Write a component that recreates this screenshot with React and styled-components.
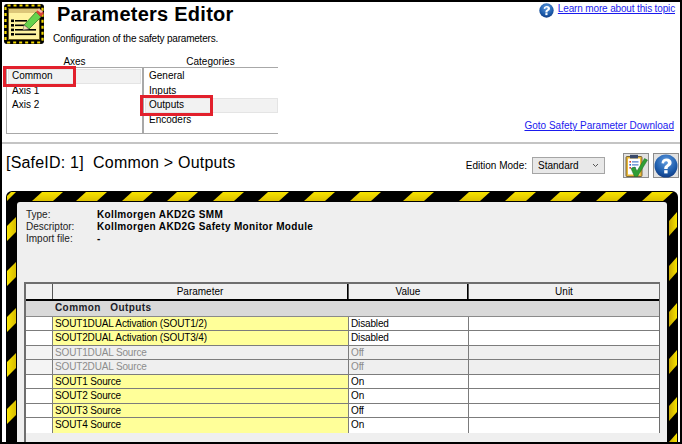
import React from "react";
import styled, { createGlobalStyle } from "styled-components";

const GlobalStyle = createGlobalStyle`
  html, body {
    margin: 0;
    padding: 0;
    background: #fff;
  }
  body {
    font-family: "Liberation Sans", Arial, sans-serif;
    font-size: 10px;
    color: #000;
  }
`;

const Window = styled.div`
  position: relative;
  width: 682px;
  height: 444px;
  box-sizing: border-box;
  border: 2px solid #000;
  background: #fff;
  overflow: hidden;
`;

const Header = styled.header`
  position: relative;
  height: 140px;
  border-bottom: 2px solid #c4c4c4;
  display: grid;
  grid-template-columns: 47px 1fr auto;
  grid-template-rows: 54px 1fr;
`;

const Logo = styled.div`
  padding: 2px 0 0 2px;
`;

const TitleBlock = styled.div`
  padding: 0 0 0 4px;
`;

const Title = styled.h1`
  margin: 0 0 0 4px;
  font-size: 20px;
  line-height: 22px;
  padding-top: 1px;
  font-weight: bold;
  letter-spacing: 0.25px;
`;

const Subtitle = styled.p`
  margin: 8px 0 0 0;
  font-size: 10px;
  line-height: 12px;
  letter-spacing: -0.2px;
`;

const Link = styled.a`
  color: #1a1aee;
  text-decoration: underline;
  font-size: 10px;
  line-height: 12px;
  letter-spacing: ${(p) => p.$spacing || 0}px;
`;

const TopicLink = styled.div`
  display: flex;
  align-items: flex-start;
  justify-content: flex-end;
  gap: 4px;
  padding: 1px 5px 0 0;
`;

const ListsRow = styled.div`
  grid-column: 1 / 3;
  display: flex;
  padding: 0 0 0 4px;
`;

const ListColumn = styled.div`
  width: ${(p) => p.$width}px;
`;

const ListLabel = styled.div`
  text-align: center;
  font-size: 10px;
  line-height: 11px;
`;

const ListBox = styled.div`
  height: 67px;
  box-sizing: border-box;
  border: 1px solid #a8a8a8;
  border-right: ${(p) => (p.$open ? "none" : "1px solid #a8a8a8")};
  padding: 1px 0 0 1px;
`;

const ListItem = styled.div`
  height: 14.6px;
  line-height: 14px;
  font-size: 10px;
  padding-left: 4px;
  box-sizing: border-box;
  margin-right: ${(p) => (p.$open ? "0" : "1px")};
  background: ${(p) => (p.$active ? "#f2f2f2" : "transparent")};
  outline: ${(p) => (p.$active ? "1px solid #e4e4e4" : "none")};
  outline-offset: -1px;
`;

const DownloadCell = styled.div`
  display: flex;
  align-items: flex-end;
  justify-content: flex-end;
  padding: 0 6px 10px 0;
`;

const Callout = styled.div`
  position: absolute;
  left: ${(p) => p.$x}px;
  top: ${(p) => p.$y}px;
  width: 73px;
  height: 21px;
  box-sizing: border-box;
  border: 3px solid #e2202c;
`;

const Toolbar = styled.div`
  height: 47px;
  display: flex;
  align-items: flex-start;
  justify-content: space-between;
  padding: 9px 1px 0 4px;
  box-sizing: border-box;
`;

const Heading = styled.h2`
  margin: 0;
  padding-top: 1px;
  font-size: 16px;
  line-height: 18px;
  font-weight: normal;
  letter-spacing: 0.2px;
  white-space: pre;
`;

const ToolbarRight = styled.div`
  display: flex;
  align-items: flex-start;
`;

const ModeLabel = styled.span`
  font-size: 10px;
  line-height: 16px;
  margin: 5px 5px 0 0;
`;

const ModeSelect = styled.div`
  width: 73px;
  height: 17px;
  box-sizing: border-box;
  margin: 4px 18px 0 0;
  border: 1px solid #a5a5a5;
  background: #e8e8e8;
  display: flex;
  align-items: center;
  justify-content: space-between;
  padding: 0 5px 0 5px;
  font-size: 10px;
`;

const IconButton = styled.div`
  width: 26px;
  height: 25px;
  box-sizing: border-box;
  margin-left: ${(p) => p.$gap || 0}px;
  border: 1px solid #8c8c8c;
  background: #e2e2e2;
  display: flex;
  align-items: center;
  justify-content: center;
`;

const HazardFrame = styled.section`
  margin: 0 0 0 4px;
  width: 672px;
  height: 251px;
  background: #000;
  border-radius: 6px 6px 0 0;
  display: grid;
  grid-template-columns: 11px 1fr 11px;
  grid-template-rows: 11px 1fr;
  overflow: hidden;
`;

const TopBand = styled.svg`
  grid-column: 1 / 4;
  display: block;
`;

const SideBand = styled.svg`
  display: block;
`;

const Panel = styled.div`
  background: #efefef;
  border-radius: 3px 3px 0 0;
  padding: 7px 0 0 7px;
  min-height: 0;
  overflow: hidden;
  display: flex;
  flex-direction: column;
`;

const InfoGrid = styled.dl`
  margin: 0 0 0 2px;
  display: grid;
  grid-template-columns: 71px 1fr;
  grid-auto-rows: 12.2px;
  height: 73px;
  font-size: 10px;
  line-height: 12px;
  flex: none;
`;

const InfoKey = styled.dt`
  color: #222;
`;

const InfoValue = styled.dd`
  margin: 0;
  font-weight: bold;
  letter-spacing: 0.35px;
`;

const Table = styled.div`
  width: 636px;
  flex: 1;
  box-sizing: border-box;
  border-top: 2px solid #6e6e6e;
  border-left: 2px solid #6e6e6e;
`;

const TableBody = styled.div`
  border-right: 1px solid #6e6e6e;
`;

const columns = "26px 296px 120px 1fr";

const HeadRow = styled.div`
  display: grid;
  grid-template-columns: ${columns};
  height: 17px;
  background: #f0f0f0;
  border-bottom: 2px solid #000;
  box-sizing: border-box;
`;

const HeadCell = styled.div`
  text-align: center;
  font-size: 10px;
  line-height: 15px;
  border-left: ${(p) => (p.$first ? "none" : "1px solid #555")};
  border-right: ${(p) => (p.$bar ? "1px solid #000" : "none")};
`;

const GroupRow = styled.div`
  display: grid;
  grid-template-columns: 26px 1fr;
  height: 15.5px;
  background: #d9d9d9;
  border-bottom: 1px solid #8a8a8a;
  box-sizing: border-box;
`;

const GroupLabel = styled.div`
  padding-left: 3px;
  font-weight: bold;
  font-size: 10px;
  line-height: 13px;
  letter-spacing: 0.4px;
  color: #1c1c28;
  white-space: pre;
`;

const Row = styled.div`
  display: grid;
  grid-template-columns: ${columns};
  height: 14.55px;
  box-sizing: border-box;
  border-bottom: ${(p) => (p.$last ? "none" : "1px solid #7c7c7c")};
  font-size: 10px;
  line-height: 14px;
  letter-spacing: -0.15px;
  color: ${(p) => (p.$disabled ? "#8c8c8c" : "#000")};
  background: ${(p) => (p.$disabled ? "#efefef" : "#fff")};
`;

const RowHandle = styled.div`
  background: ${(p) => (p.$disabled ? "#f4f4f4" : "#fff")};
`;

const NameCell = styled.div`
  border-left: 1px solid #7c7c7c;
  padding-left: 2px;
  background: ${(p) => (p.$disabled ? "#efefef" : "#ffff99")};
  white-space: nowrap;
  overflow: hidden;
`;

const ValueCell = styled.div`
  border-left: 1px solid #7c7c7c;
  padding-left: 2px;
  overflow: hidden;
`;

// stripes measured per band, the spacing is not even in the original
const topStripes = [32, 76, 122, 167, 213, 258, 304, 350, 403, 459, 505, 550, 596, 642];
const leftStripes = [15, 60, 106, 151, 198];
const rightStripes = [10, 55, 101, 148, 195, 231];

const StripeColors = () => (
  <defs>
    <linearGradient id="hazard" x1="0" y1="0" x2="0" y2="1">
      <stop offset="0" stopColor="#f8e400" />
      <stop offset="1" stopColor="#dcc000" />
    </linearGradient>
    <linearGradient id="hazardLeft" x1="0" y1="0" x2="1" y2="0">
      <stop offset="0" stopColor="#f8e400" />
      <stop offset="1" stopColor="#d8bc00" />
    </linearGradient>
    <linearGradient id="hazardRight" x1="0" y1="0" x2="1" y2="0">
      <stop offset="0" stopColor="#c8a800" />
      <stop offset="1" stopColor="#f8e400" />
    </linearGradient>
  </defs>
);

const TopHazard = () => (
  <TopBand width="672" height="11" viewBox="0 0 672 11">
    <StripeColors />
    <polygon points="1,10 1,5 5,1 10,1" fill="url(#hazard)" />
    {topStripes.map((x) => (
      <polygon
        key={x}
        points={`${x - 6},10 ${x + 15},10 ${x + 25},1 ${x + 4},1`}
        fill="url(#hazard)"
      />
    ))}
  </TopBand>
);

const SideHazard = ({ stripes, x0, x1, fill }) => (
  <SideBand width="11" height="240" viewBox="0 0 11 240">
    {stripes.map((t) => (
      <polygon
        key={t}
        points={`${x0},${t + 24} ${x1},${t + 15} ${x1},${t} ${x0},${t + 9}`}
        fill={fill}
      />
    ))}
  </SideBand>
);

const SafetyLogo = () => (
  <svg width="42" height="41" viewBox="0 0 42 41">
    <rect x="0" y="0" width="40" height="40" rx="3" fill="#000" />
    <rect x="1.5" y="1.5" width="37" height="37" rx="2" fill="none" stroke="#f2d800" strokeWidth="2.2" strokeDasharray="3 3" />
    <rect x="4.5" y="4.5" width="31" height="31" fill="#fff3a0" stroke="#6a5c20" />
    <rect x="5" y="5" width="30" height="4" fill="#dcc678" />
    <g fill="#000">
      <rect x="7" y="15.5" width="3" height="2.6" />
      <rect x="7" y="20" width="3" height="2.6" />
      <rect x="7" y="24.6" width="3" height="2.6" />
      <rect x="7" y="29" width="3" height="2.6" />
      <rect x="11" y="16" width="12" height="1.6" />
      <rect x="11" y="20.5" width="13" height="1.6" />
      <rect x="11" y="25" width="21" height="1.6" />
      <rect x="11" y="29.5" width="21" height="1.6" />
    </g>
    <polygon points="20,21 32,8 37,13 25,25" fill="#66d24c" stroke="#2c7d25" strokeWidth="0.8" />
    <polygon points="20,21 25,25 19,26" fill="#f5dfb0" stroke="#555" strokeWidth="0.5" />
    <polygon points="32,8 35,4.5 40,9 37,13" fill="#d8433a" />
    <polygon points="33,6 35,4.5 39,7.5 37,9" fill="#f4c0b0" />
  </svg>
);

const HelpBall = ({ size, id }) => (
  <svg width={size} height={size} viewBox="0 0 24 24">
    <defs>
      <radialGradient id={id} cx="0.5" cy="0.3" r="0.8">
        <stop offset="0" stopColor="#5f9be0" />
        <stop offset="0.6" stopColor="#1d5cab" />
        <stop offset="1" stopColor="#0b2e74" />
      </radialGradient>
    </defs>
    <circle cx="12" cy="12" r="11.5" fill={`url(#${id})`} />
    <path
      d="M7.5 9.2C7.7 6 10 4.6 12.6 4.6c3 0 5 1.7 5 4.1 0 1.9-1.1 2.9-2.5 3.8-1.1.7-1.5 1.2-1.5 2.5h-3.4c0-2.2.6-3.1 2.1-4.1 1-.7 1.6-1.2 1.6-2.1 0-.9-.7-1.5-1.8-1.5-1.2 0-1.9.7-2 2.1z"
      fill="#fff"
    />
    <rect x="10.2" y="16.2" width="3.4" height="3.2" fill="#fff" />
  </svg>
);

const ClipboardCheck = () => (
  <svg width="24" height="23" viewBox="0 0 24 23">
    <rect x="2" y="2.5" width="16" height="20" rx="1" fill="#e8b73a" stroke="#5a4a20" strokeWidth="0.8" />
    <rect x="4" y="4.5" width="12" height="16" fill="#fff" />
    <rect x="6" y="0.8" width="8" height="3.6" fill="#3a4a6a" />
    <g fill="#d43a3a">
      <rect x="5.4" y="7" width="1.6" height="1.6" />
      <rect x="5.4" y="13" width="1.6" height="1.6" />
    </g>
    <rect x="5.4" y="10" width="1.6" height="1.6" fill="#2a62c0" />
    <g fill="#2a62c0">
      <rect x="8" y="7.4" width="6.5" height="1" />
      <rect x="8" y="10.4" width="6.5" height="1" />
      <rect x="8" y="13.4" width="4" height="1" />
    </g>
    <path d="M7 14.5 L10.8 13 L13 17 L20.5 4.5 L23.5 6 L13.5 22.5 L10.5 22.5 Z" fill="#2f9e35" stroke="#1b6b20" strokeWidth="0.5" />
  </svg>
);

const Chevron = () => (
  <svg width="7" height="5" viewBox="0 0 7 5">
    <path d="M1 1 L3.5 3.5 L6 1" fill="none" stroke="#555" strokeWidth="1" />
  </svg>
);

const axes = ["Common", "Axis 1", "Axis 2"];
const categories = ["General", "Inputs", "Outputs", "Encoders"];

const rows = [
  { name: "SOUT1DUAL Activation (SOUT1/2)", value: "Disabled" },
  { name: "SOUT2DUAL Activation (SOUT3/4)", value: "Disabled" },
  { name: "SOUT1DUAL Source", value: "Off", disabled: true },
  { name: "SOUT2DUAL Source", value: "Off", disabled: true },
  { name: "SOUT1 Source", value: "On" },
  { name: "SOUT2 Source", value: "On" },
  { name: "SOUT3 Source", value: "Off" },
  { name: "SOUT4 Source", value: "On" },
];

const App = () => {
  return (
    <Window>
      <GlobalStyle />
      <Header>
        <Logo>
          <SafetyLogo />
        </Logo>
        <TitleBlock>
          <Title>Parameters Editor</Title>
          <Subtitle>Configuration of the safety parameters.</Subtitle>
        </TitleBlock>
        <TopicLink>
          <HelpBall size={15} id="ballSmall" />
          <Link href="#" $spacing={-0.15}>
            Learn more about this topic
          </Link>
        </TopicLink>
        <ListsRow>
          <ListColumn $width={137}>
            <ListLabel>Axes</ListLabel>
            <ListBox>
              {axes.map((a, i) => (
                <ListItem key={a} $active={i === 0}>
                  {a}
                </ListItem>
              ))}
            </ListBox>
          </ListColumn>
          <ListColumn $width={135}>
            <ListLabel>Categories</ListLabel>
            <ListBox $open>
              {categories.map((c) => (
                <ListItem key={c} $open $active={c === "Outputs"}>
                  {c}
                </ListItem>
              ))}
            </ListBox>
          </ListColumn>
        </ListsRow>
        <DownloadCell>
          <Link href="#">Goto Safety Parameter Download</Link>
        </DownloadCell>
        <Callout $x={1} $y={64} />
        <Callout $x={138} $y={93} />
      </Header>
      <Toolbar>
        <Heading>{"[SafeID: 1]  Common > Outputs"}</Heading>
        <ToolbarRight>
          <ModeLabel>Edition Mode:</ModeLabel>
          <ModeSelect>
            Standard
            <Chevron />
          </ModeSelect>
          <IconButton>
            <ClipboardCheck />
          </IconButton>
          <IconButton $gap={4}>
            <HelpBall size={24} id="ballLarge" />
          </IconButton>
        </ToolbarRight>
      </Toolbar>
      <HazardFrame>
        <TopHazard />
        <SideHazard stripes={leftStripes} x0={1} x1={10} fill="url(#hazardLeft)" />
        <Panel>
          <InfoGrid>
            <InfoKey>Type:</InfoKey>
            <InfoValue>Kollmorgen AKD2G SMM</InfoValue>
            <InfoKey>Descriptor:</InfoKey>
            <InfoValue>Kollmorgen AKD2G Safety Monitor Module</InfoValue>
            <InfoKey>Import file:</InfoKey>
            <InfoValue>-</InfoValue>
          </InfoGrid>
          <Table>
            <TableBody>
              <HeadRow>
                <HeadCell $first />
                <HeadCell $bar>Parameter</HeadCell>
                <HeadCell $bar>Value</HeadCell>
                <HeadCell>Unit</HeadCell>
              </HeadRow>
              <GroupRow>
                <div />
                <GroupLabel>{"Common   Outputs"}</GroupLabel>
              </GroupRow>
              {rows.map((r, i) => (
                <Row key={r.name} $disabled={r.disabled} $last={i === rows.length - 1}>
                  <RowHandle $disabled={r.disabled} />
                  <NameCell $disabled={r.disabled}>{r.name}</NameCell>
                  <ValueCell>{r.value}</ValueCell>
                  <ValueCell />
                </Row>
              ))}
            </TableBody>
          </Table>
        </Panel>
        <SideHazard stripes={rightStripes} x0={2} x1={10} fill="url(#hazardRight)" />
      </HazardFrame>
    </Window>
  );
};

export default App;
